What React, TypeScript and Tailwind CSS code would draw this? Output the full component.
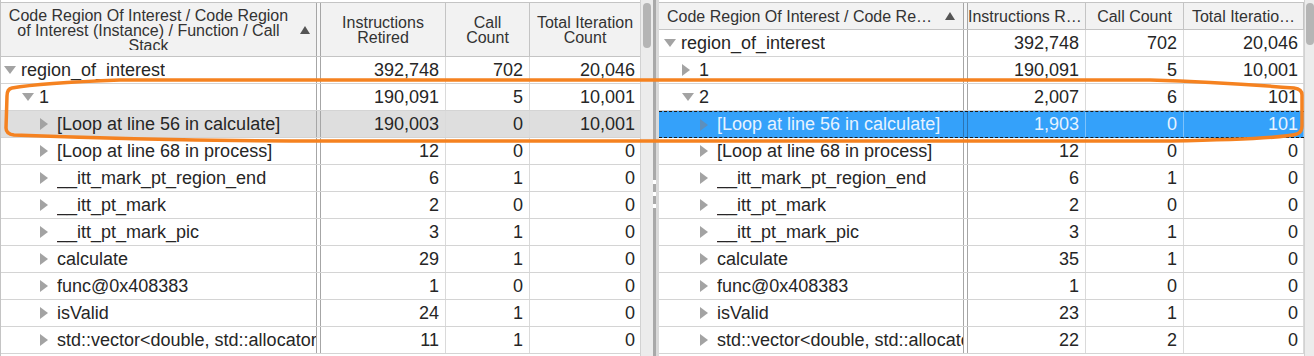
type Row = {
  label: string;
  level: 0 | 1 | 2;
  open?: boolean;
  ir: string;
  cc: string;
  tic: string;
  sel?: "grey" | "blue";
};

const leftRows: Row[] = [
  { label: "region_of_interest", level: 0, open: true, ir: "392,748", cc: "702", tic: "20,046" },
  { label: "1", level: 1, open: true, ir: "190,091", cc: "5", tic: "10,001" },
  { label: "[Loop at line 56 in calculate]", level: 2, ir: "190,003", cc: "0", tic: "10,001", sel: "grey" },
  { label: "[Loop at line 68 in process]", level: 2, ir: "12", cc: "0", tic: "0" },
  { label: "__itt_mark_pt_region_end", level: 2, ir: "6", cc: "1", tic: "0" },
  { label: "__itt_pt_mark", level: 2, ir: "2", cc: "0", tic: "0" },
  { label: "__itt_pt_mark_pic", level: 2, ir: "3", cc: "1", tic: "0" },
  { label: "calculate", level: 2, ir: "29", cc: "1", tic: "0" },
  { label: "func@0x408383", level: 2, ir: "1", cc: "0", tic: "0" },
  { label: "isValid", level: 2, ir: "24", cc: "1", tic: "0" },
  { label: "std::vector<double, std::allocator<double>>::operator[]", level: 2, ir: "11", cc: "1", tic: "0" },
];

const rightRows: Row[] = [
  { label: "region_of_interest", level: 0, open: true, ir: "392,748", cc: "702", tic: "20,046" },
  { label: "1", level: 1, ir: "190,091", cc: "5", tic: "10,001" },
  { label: "2", level: 1, open: true, ir: "2,007", cc: "6", tic: "101" },
  { label: "[Loop at line 56 in calculate]", level: 2, ir: "1,903", cc: "0", tic: "101", sel: "blue" },
  { label: "[Loop at line 68 in process]", level: 2, ir: "12", cc: "0", tic: "0" },
  { label: "__itt_mark_pt_region_end", level: 2, ir: "6", cc: "1", tic: "0" },
  { label: "__itt_pt_mark", level: 2, ir: "2", cc: "0", tic: "0" },
  { label: "__itt_pt_mark_pic", level: 2, ir: "3", cc: "1", tic: "0" },
  { label: "calculate", level: 2, ir: "35", cc: "1", tic: "0" },
  { label: "func@0x408383", level: 2, ir: "1", cc: "0", tic: "0" },
  { label: "isValid", level: 2, ir: "23", cc: "1", tic: "0" },
  { label: "std::vector<double, std::allocator<double>>::operator[]", level: 2, ir: "22", cc: "2", tic: "0" },
];

const leftIndent = { 0: "pl-[2px]", 1: "pl-[20px]", 2: "pl-[38px]" };
const rightIndent = { 0: "pl-[4px]", 1: "pl-[22px]", 2: "pl-[40px]" };

type Cols = { tree: string; ir: string; cc: string; tic: string };

const Twisty = ({ open, color }: { open?: boolean; color: string }) => (
  <span className="w-[18px] shrink-0 flex items-center">
    {open ? (
      <svg width="12" height="8" viewBox="0 0 12 8" className="ml-[1px]">
        <polygon points="0,0 12,0 6,8" fill={color} />
      </svg>
    ) : (
      <svg width="8" height="12" viewBox="0 0 8 12" className="ml-[1px]">
        <polygon points="0,0 8,6 0,12" fill={color} />
      </svg>
    )}
  </span>
);

const SortUp = () => (
  <svg width="10" height="8" viewBox="0 0 10 8" className="shrink-0">
    <polygon points="5,0 10,8 0,8" fill="#555" />
  </svg>
);

const DataRow = ({ row, cols, indent }: { row: Row; cols: Cols; indent: Record<number, string> }) => {
  const blue = row.sel === "blue";
  const grey = row.sel === "grey";
  const bg = blue ? "bg-[#34a1fa]" : grey ? "bg-[#dedede]" : "bg-white";
  const text = blue ? "text-[#e6f3ff]" : "text-[#262626]";
  const line = blue ? "border-[#7cc2fb]" : "border-[#dadada]";
  const split = blue ? "border-[#2b73b3]" : "border-[#a6a6a6]";
  const edge = blue
    ? "border-y border-dashed border-y-[#1a1a1a]"
    : "border-b border-[#d4d4d4]";
  return (
    <div className={`flex h-[27px] shrink-0 ${bg} ${text} ${edge}`}>
      <div className={`${cols.tree} flex items-center overflow-hidden whitespace-nowrap ${indent[row.level]}`}>
        <Twisty open={row.open} color={blue ? "#5d8fbd" : "#a3a3a3"} />
        <span className="min-w-0 overflow-hidden">{row.label}</span>
      </div>
      <div className={`w-[5px] shrink-0 border-x ${split}`} />
      <div className={`${cols.ir} flex items-center justify-end pr-[6px] border-r ${line}`}>{row.ir}</div>
      <div className={`${cols.cc} flex items-center justify-end pr-[6px] border-r ${line}`}>{row.cc}</div>
      <div className={`${cols.tic} flex items-center justify-end pr-[5px] border-r ${line}`}>{row.tic}</div>
    </div>
  );
};

const Scrollbar = ({ w, thumb }: { w: string; thumb: string }) => (
  <div className={`${w} shrink-0 bg-[#ececec] border-l border-[#d2d2d2] pt-[3px] flex justify-center`}>
    <div className={`w-[8px] ${thumb} rounded-full bg-[#b5b5b5]`} />
  </div>
);

const LeftPanel = () => {
  const cols = { tree: "w-[315px] shrink-0", ir: "w-[125px] shrink-0", cc: "w-[84px] shrink-0", tic: "w-[111px] shrink-0" };
  return (
    <div className="flex shrink-0">
      <div className="w-[640px] flex flex-col pt-[2px] border-l border-[#c4c4c4]">
        <div className="flex h-[55px] shrink-0 bg-[#f2f2f2] border-y border-[#c4c4c4] text-[16px] leading-[15px] text-[#333]">
          <div className={`${cols.tree} relative overflow-hidden`}>
            <div className="h-[47px] overflow-hidden pt-[5px] pr-[20px] text-center">
              Code Region Of Interest / Code Region
              <br />
              of Interest (Instance) / Function / Call
              <br />
              Stack
            </div>
            <div className="absolute right-[6px] top-[23px]">
              <SortUp />
            </div>
          </div>
          <div className="w-[5px] shrink-0 border-x border-[#a6a6a6] bg-[#f7f7f7]" />
          <div className={`${cols.ir} flex items-center justify-center text-center border-r border-[#c4c4c4]`}>
            Instructions
            <br />
            Retired
          </div>
          <div className={`${cols.cc} flex items-center justify-center text-center border-r border-[#c4c4c4]`}>
            Call
            <br />
            Count
          </div>
          <div className={`${cols.tic} flex items-center justify-center text-center border-r border-[#c4c4c4]`}>
            Total Iteration
            <br />
            Count
          </div>
        </div>
        {leftRows.map((r, i) => (
          <DataRow key={i} row={r} cols={cols} indent={leftIndent} />
        ))}
      </div>
      <Scrollbar w="w-[13px]" thumb="h-[45px]" />
    </div>
  );
};

const RightPanel = () => {
  const cols = { tree: "w-[304px] shrink-0", ir: "w-[118px] shrink-0", cc: "w-[98px] shrink-0", tic: "w-[120px] shrink-0" };
  return (
    <div className="flex flex-1 min-w-0">
      <div className="flex-1 flex flex-col pt-[2px]">
        <div className="flex h-[28px] shrink-0 bg-[#f2f2f2] border-y border-[#c4c4c4] text-[16px] leading-[15px] text-[#333] whitespace-nowrap">
          <div className={`${cols.tree} flex items-center justify-between pl-[8px] pr-[8px] overflow-hidden`}>
            <span>Code Region Of Interest / Code Re…</span>
            <SortUp />
          </div>
          <div className="w-[5px] shrink-0 border-x border-[#a6a6a6] bg-[#f7f7f7]" />
          <div className={`${cols.ir} flex items-center overflow-hidden border-r border-[#c4c4c4]`}>
            Instructions R…
          </div>
          <div className={`${cols.cc} flex items-center justify-center border-r border-[#c4c4c4]`}>Call Count</div>
          <div className={`${cols.tic} flex items-center justify-center overflow-hidden border-r border-[#c4c4c4]`}>
            Total Iteratio…
          </div>
        </div>
        {rightRows.map((r, i) => (
          <DataRow key={i} row={r} cols={cols} indent={rightIndent} />
        ))}
      </div>
      <Scrollbar w="w-[10px]" thumb="h-[42px]" />
    </div>
  );
};

const Splitter = () => (
  <div className="w-[6px] shrink-0 flex">
    <div className="w-[3px] bg-[#a9a9a9] flex flex-col items-center pt-[180px] gap-[8px]">
      <div className="w-[3px] h-[4px] bg-white" />
      <div className="w-[3px] h-[4px] bg-white" />
      <div className="w-[3px] h-[4px] bg-white" />
    </div>
    <div className="w-[3px] bg-[#dadada]" />
  </div>
);

export default function App() {
  return (
    <div className="relative w-[1314px] h-[356px] overflow-hidden bg-white font-['Liberation_Sans',Arial,sans-serif] text-[18px]">
      <div className="flex h-full">
        <LeftPanel />
        <Splitter />
        <RightPanel />
      </div>
      <svg className="absolute inset-0 pointer-events-none" width="1314" height="356" viewBox="0 0 1314 356">
        <path
          d="M 12 88 Q 7 89 7 96 L 6 128 Q 6 134 14 135 Q 170 141 330 141 L 1170 141 Q 1280 139 1297 134 Q 1302 132 1302 126 L 1302 95 Q 1302 89 1294 88 Q 1220 82 1150 80 L 120 80 Q 40 83 12 88 Z"
          fill="none"
          stroke="#f58220"
          strokeWidth="3.5"
          strokeLinejoin="round"
        />
      </svg>
    </div>
  );
}
